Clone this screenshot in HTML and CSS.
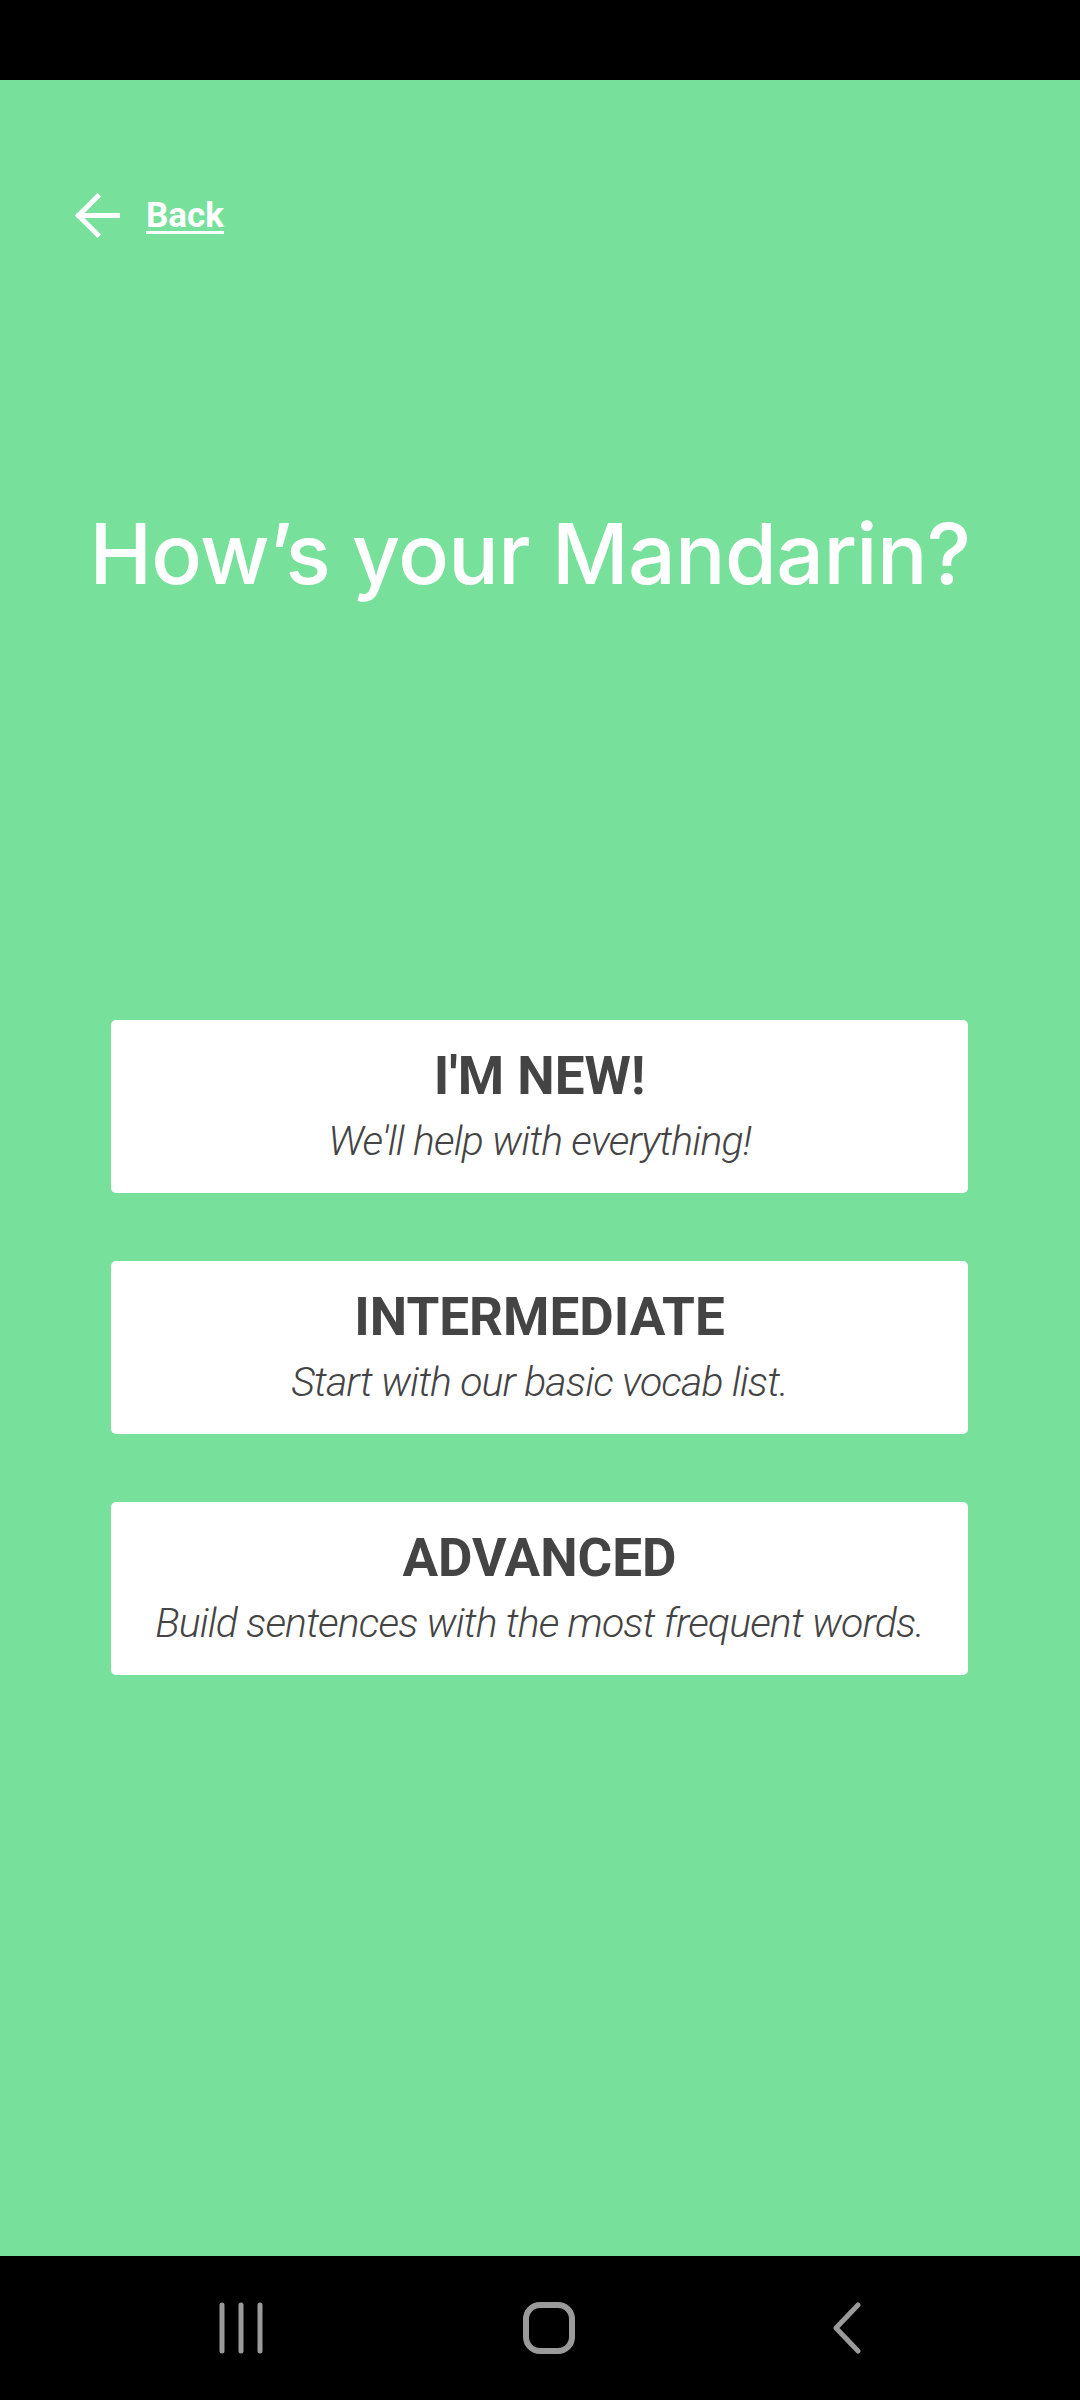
FILE: index.html
```html
<!DOCTYPE html>
<html lang="en">
<head>
<meta charset="utf-8">
<title>How's your Mandarin?</title>
<link rel="stylesheet" href="styles.css">
</head>
<body>
<div class="screen">
  <div class="status-bar"></div>
  <main class="main">
    <a class="back" href="#">
      <svg class="back-icon" width="46" height="46" viewBox="0 0 46 46" aria-hidden="true">
        <path d="M45 22.5H5 M23.5 3.5L4.5 22.5L23.5 41.5" fill="none" stroke="#fff" stroke-width="5" stroke-linecap="square" stroke-linejoin="miter"/>
      </svg>
      <span class="back-label">Back</span>
    </a>
    <h1 class="title">How’s your Mandarin?</h1>
    <div class="options">
      <button class="option">
        <span class="option-title">I'M NEW!</span>
        <span class="option-sub">We'll help with everything!</span>
      </button>
      <button class="option">
        <span class="option-title">INTERMEDIATE</span>
        <span class="option-sub">Start with our basic vocab list.</span>
      </button>
      <button class="option">
        <span class="option-title">ADVANCED</span>
        <span class="option-sub">Build sentences with the most frequent words.</span>
      </button>
    </div>
  </main>
  <nav class="nav-bar">
    <svg class="nav-icon" width="48" height="52" viewBox="0 0 48 52" aria-hidden="true">
      <path d="M4 3V49 M23 3V49 M42 3V49" stroke="#9a9a9a" stroke-width="5" stroke-linecap="round"/>
    </svg>
    <svg class="nav-icon" width="54" height="54" viewBox="0 0 54 54" aria-hidden="true">
      <rect x="4" y="4" width="46" height="46" rx="14" fill="none" stroke="#9a9a9a" stroke-width="6"/>
    </svg>
    <svg class="nav-icon" width="32" height="52" viewBox="0 0 32 52" aria-hidden="true">
      <path d="M27 3L5 26L27 49" fill="none" stroke="#9a9a9a" stroke-width="5" stroke-linecap="round" stroke-linejoin="round"/>
    </svg>
  </nav>
</div>
</body>
</html>
```
FILE: styles.css
```css
html, body {
  margin: 0;
  padding: 0;
  background: #000;
}

.screen {
  width: 1080px;
  height: 2400px;
  display: flex;
  flex-direction: column;
  overflow: hidden;
}

.status-bar {
  height: 80px;
  background: #000;
  flex: none;
}

.main {
  flex: 1;
  background: #77e09b;
  display: flex;
  flex-direction: column;
}

.back {
  margin-top: 113px;
  margin-left: 74px;
  display: flex;
  align-items: center;
  gap: 26px;
  height: 46px;
  color: #fff;
  text-decoration: none;
  align-self: flex-start;
}

.back-icon {
  display: block;
}

.back-label {
  font-family: Roboto, "Liberation Sans", sans-serif;
  font-weight: 700;
  font-size: 35px;
  line-height: 40px;
  text-decoration: underline;
  text-decoration-thickness: 3px;
  text-underline-offset: 4px;
}

.title {
  margin: 263px 0 0 0;
  font-family: Inter, "Liberation Sans", sans-serif;
  font-weight: 500;
  font-size: 84px;
  line-height: 104px;
  color: #fff;
  text-align: center;
  letter-spacing: -0.6px;
  padding-right: 20px;
}

.options {
  margin: 414px 112px 0 111px;
  display: flex;
  flex-direction: column;
  gap: 68px;
}

.option {
  display: flex;
  flex-direction: column;
  align-items: center;
  background: #fff;
  border: none;
  border-radius: 5px;
  padding: 25px 0 27px;
  margin: 0;
  color: #444;
  cursor: pointer;
}

.option-title {
  font-family: Roboto, "Liberation Sans", sans-serif;
  font-weight: 700;
  font-size: 53px;
  line-height: 62px;
}

.option-sub {
  margin-top: 9px;
  font-family: Roboto, "Liberation Sans", sans-serif;
  font-style: italic;
  font-weight: 300;
  font-size: 41px;
  line-height: 50px;
  letter-spacing: -0.85px;
}

.nav-bar {
  height: 144px;
  flex: none;
  background: #000;
  display: flex;
  align-items: center;
  justify-content: space-between;
  padding: 0 217px 0 218px;
  box-sizing: border-box;
}

.nav-icon {
  display: block;
}
```
